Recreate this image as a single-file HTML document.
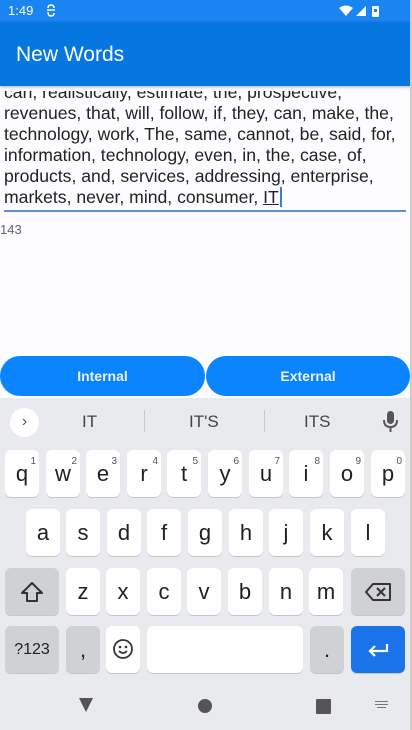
<!DOCTYPE html>
<html><head><meta charset="utf-8"><style>
*{margin:0;padding:0;box-sizing:border-box}
body{width:412px;height:730px;overflow:hidden;background:#fdfcff;font-family:"Liberation Sans",Roboto,sans-serif;position:relative}
.abs{position:absolute}
#sb{left:0;top:0;width:412px;height:22px;background:#1a84f2;color:#fff;font-size:13px}
#ab{left:0;top:22px;width:412px;height:64px;background:#0677e0;color:#fff;font-size:21px;box-shadow:0 1px 3px rgba(0,0,0,.3)}
#txt{left:4px;top:91px;width:404px;height:119px;overflow:hidden;font-size:17.6px;line-height:21px;color:#222}
#txt div{white-space:nowrap}
.btn{top:356px;height:40px;border-radius:20px;background:#0a84ff;color:#e8f2ff;font-size:14px;font-weight:bold;text-align:center;line-height:40px}
#kb{left:0;top:398px;width:410px;height:332px;background:#e8eaed}
.k{position:absolute;width:34px;height:47px;background:#fff;border-radius:6px;box-shadow:0 1px 0 #c4c6ca;font-size:22px;color:#202124;text-align:center;line-height:47px}
.k sup{position:absolute;right:3px;top:-12px;font-size:10px;color:#555}
.g{background:#cfd1d5}
.sg{top:14px;font-size:17px;color:#444}
</style></head><body>
<div id="sb" class="abs"><span class="abs" style="left:8px;top:3px">1:49</span>
<svg class="abs" style="left:46px;top:4px" width="10" height="13"><path d="M2 4 Q2 1 5 1 Q8 1 8 4 M1 6 L9 6 M2 8 Q2 12 5 12 Q8 12 8 9" fill="none" stroke="#fff" stroke-width="1.5"/></svg>
<svg class="abs" style="left:338px;top:4px" width="50" height="14"><path d="M1 4 Q8 -1 15 4 L8 12Z" fill="#fff"/><path d="M18 12 L28 2 L28 12Z" fill="#fff"/><rect x="34" y="2" width="7" height="11" rx="1" fill="#fff"/><rect x="36" y="5" width="3" height="3" fill="#1a84f2"/></svg></div>
<div id="ab" class="abs"><span class="abs" style="left:16px;top:21px">New Words</span></div>
<div id="txt" class="abs">
<div style="margin-top:-9px">can, realistically, estimate, the, prospective,</div>
<div>revenues, that, will, follow, if, they, can, make, the,</div>
<div>technology, work, The, same, cannot, be, said, for,</div>
<div>information, technology, even, in, the, case, of,</div>
<div>products, and, services, addressing, enterprise,</div>
<div>markets, never, mind, consumer, <u>IT</u><span style="border-left:2px solid #3a7fd8;margin-left:1px"></span></div>
</div>
<div class="abs" style="left:4px;top:210px;width:402px;height:2px;background:#5b8fd8"></div>
<div class="abs" style="left:0;top:222px;font-size:13px;color:#666">143</div>
<div class="abs btn" style="left:0;width:205px">Internal</div>
<div class="abs btn" style="left:206px;width:204px">External</div>
<div class="abs" style="left:410px;top:0;width:2px;height:730px;background:#ccc"></div>
<div id="kb" class="abs">
<div class="abs" style="left:10px;top:10px;width:29px;height:29px;border-radius:50%;background:#fff;color:#555;text-align:center;line-height:28px;font-size:16px">&#x203A;</div>
<div class="abs sg" style="left:82px">IT</div>
<div class="abs sg" style="left:189px">IT'S</div>
<div class="abs sg" style="left:304px">ITS</div>
<div class="abs" style="left:144px;top:12px;width:1px;height:22px;background:#c8c8c8"></div>
<div class="abs" style="left:264px;top:12px;width:1px;height:22px;background:#c8c8c8"></div>
<svg class="abs" style="left:382px;top:13px" width="18" height="24"><rect x="5" y="0" width="7" height="13" rx="3.5" fill="#555"/><path d="M2 9 Q2 16 8.5 16 Q15 16 15 9" stroke="#555" stroke-width="2" fill="none"/><rect x="7.5" y="16" width="2" height="5" fill="#555"/></svg>
</div>
<div class="abs" style="left:0;top:0">
<div class="k" style="left:5px;top:450px">q<sup>1</sup></div>
<div class="k" style="left:46px;top:450px">w<sup>2</sup></div>
<div class="k" style="left:86px;top:450px">e<sup>3</sup></div>
<div class="k" style="left:127px;top:450px">r<sup>4</sup></div>
<div class="k" style="left:167px;top:450px">t<sup>5</sup></div>
<div class="k" style="left:208px;top:450px">y<sup>6</sup></div>
<div class="k" style="left:249px;top:450px">u<sup>7</sup></div>
<div class="k" style="left:289px;top:450px">i<sup>8</sup></div>
<div class="k" style="left:330px;top:450px">o<sup>9</sup></div>
<div class="k" style="left:371px;top:450px">p<sup>0</sup></div>
<div class="k" style="left:26px;top:509px">a</div>
<div class="k" style="left:66px;top:509px">s</div>
<div class="k" style="left:107px;top:509px">d</div>
<div class="k" style="left:147px;top:509px">f</div>
<div class="k" style="left:188px;top:509px">g</div>
<div class="k" style="left:229px;top:509px">h</div>
<div class="k" style="left:269px;top:509px">j</div>
<div class="k" style="left:310px;top:509px">k</div>
<div class="k" style="left:351px;top:509px">l</div>
<div class="k g" style="left:5px;top:568px;width:54px"><svg width="26" height="22" style="margin-top:13px"><path d="M13 2 L23 12 L18 12 L18 20 L8 20 L8 12 L3 12Z" fill="none" stroke="#333" stroke-width="2" stroke-linejoin="round"/></svg></div>
<div class="k" style="left:66px;top:568px">z</div>
<div class="k" style="left:106px;top:568px">x</div>
<div class="k" style="left:147px;top:568px">c</div>
<div class="k" style="left:187px;top:568px">v</div>
<div class="k" style="left:228px;top:568px">b</div>
<div class="k" style="left:269px;top:568px">n</div>
<div class="k" style="left:309px;top:568px">m</div>
<div class="k g" style="left:351px;top:568px;width:54px"><svg width="28" height="20" style="margin-top:14px"><path d="M9 2 L26 2 L26 18 L9 18 L2 10Z" fill="none" stroke="#333" stroke-width="2" stroke-linejoin="round"/><path d="M13 6 L21 14 M21 6 L13 14" stroke="#333" stroke-width="2"/></svg></div>
<div class="k g" style="left:5px;top:626px;width:54px;font-size:16px">?123</div>
<div class="k g" style="left:66px;top:626px">,</div>
<div class="k" style="left:106px;top:626px"><svg width="22" height="22" style="margin-top:12px"><circle cx="11" cy="11" r="9" fill="none" stroke="#333" stroke-width="1.8"/><circle cx="8" cy="9" r="1.3" fill="#333"/><circle cx="14" cy="9" r="1.3" fill="#333"/><path d="M7 13 Q11 17 15 13" fill="none" stroke="#333" stroke-width="1.6"/></svg></div>
<div class="k" style="left:147px;top:626px;width:156px"></div>
<div class="k g" style="left:310px;top:626px">.</div>
<div class="k" style="left:351px;top:626px;width:54px;background:#1a73e8"><svg width="24" height="16" style="margin-top:16px"><path d="M21 2 L21 9 L4 9 M9 4 L4 9 L9 14" fill="none" stroke="#fff" stroke-width="2.2"/></svg></div>
</div>
<svg class="abs" style="left:0;top:690px" width="412" height="30"><path d="M79 8 L93 8 L86 22Z" fill="#555"/><circle cx="205" cy="16" r="7" fill="#555"/><rect x="316" y="9" width="15" height="15" rx="1" fill="#555"/><g fill="#777"><rect x="375" y="11" width="13" height="1"/><rect x="375" y="14" width="13" height="1"/><rect x="377" y="17" width="9" height="1"/></g></svg>
</body></html>
